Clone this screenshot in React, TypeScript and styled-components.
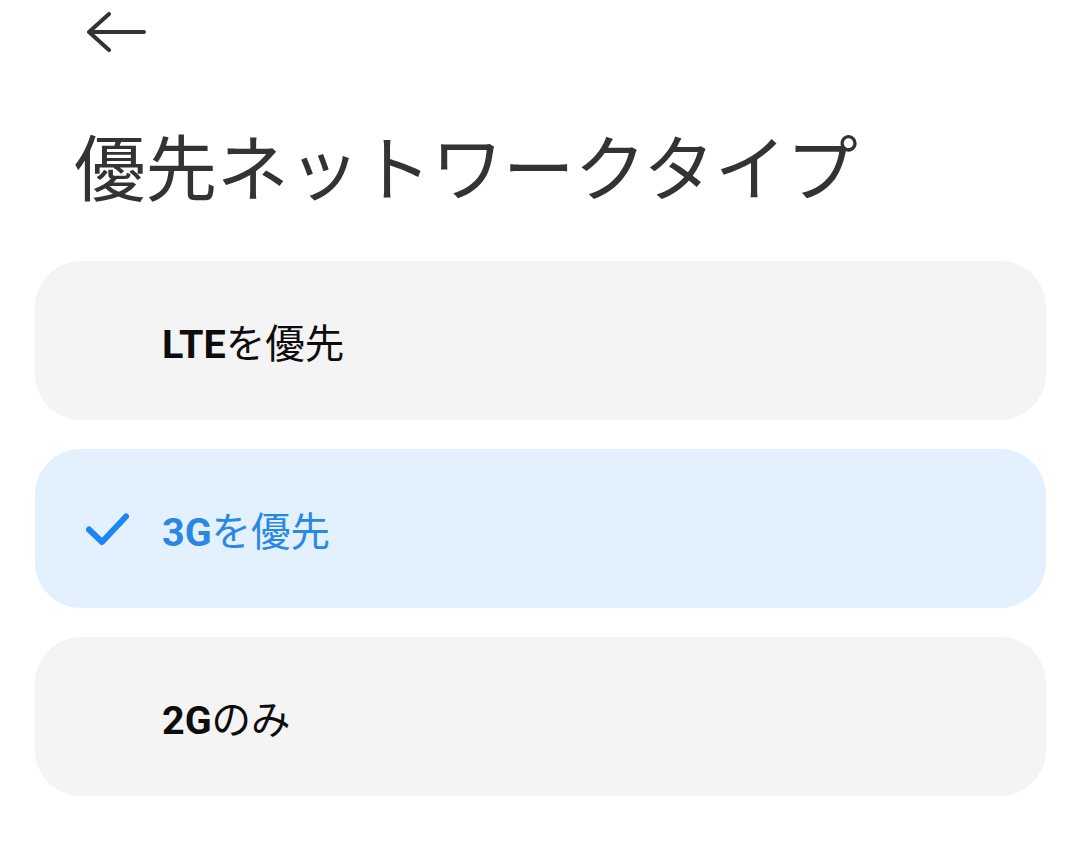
import styled, { createGlobalStyle } from "styled-components";

const GlobalStyle = createGlobalStyle`
  html, body {
    margin: 0;
    padding: 0;
    background: #ffffff;
  }
  body {
    font-family: Roboto, "Noto Sans CJK JP", sans-serif;
  }
`;

const Page = styled.div`
  width: 1080px;
  min-height: 857px;
  background: #ffffff;
  display: flex;
  flex-direction: column;
`;

const TopBar = styled.div`
  display: flex;
  align-items: center;
  height: 64px;
  padding-left: 86px;
`;

const BackButton = styled.button`
  display: flex;
  align-items: center;
  justify-content: center;
  padding: 0;
  border: none;
  background: none;
  cursor: pointer;
  color: #333333;
`;

const Title = styled.h1`
  margin: 57px 0 0 0;
  padding-left: 74px;
  font-family: "Noto Sans CJK JP", sans-serif;
  font-size: 71.5px;
  font-weight: 400;
  line-height: 86px;
  color: #333333;
`;

const OptionList = styled.div`
  display: flex;
  flex-direction: column;
  gap: 29px;
  margin: 54px 34px 0 35px;
`;

const Option = styled.div<{ $selected?: boolean }>`
  display: flex;
  align-items: center;
  gap: 32px;
  height: 159px;
  padding-left: 51px;
  border-radius: 46px;
  background: ${(p) => (p.$selected ? "#e3f0fd" : "#f4f4f4")};
  color: ${(p) => (p.$selected ? "#2a88e4" : "#0d0d0d")};
  cursor: pointer;
`;

const CheckSlot = styled.div`
  width: 44px;
  height: 34px;
  display: flex;
  align-items: center;
  justify-content: center;
`;

const Label = styled.span`
  font-family: "Noto Sans CJK JP", sans-serif;
  font-size: 39.5px;
  font-weight: 400;
  line-height: 1;
  padding-top: 4px;
`;

const Latin = styled.span`
  font-family: Roboto, sans-serif;
  font-weight: 700;
`;

const options = [
  { latin: "LTE", rest: "を優先", selected: false },
  { latin: "3G", rest: "を優先", selected: true },
  { latin: "2G", rest: "のみ", selected: false },
];

export default function App() {
  return (
    <>
      <GlobalStyle />
      <Page>
        <TopBar>
          <BackButton aria-label="戻る">
            <svg width="60" height="40" viewBox="0 0 60 40" fill="none">
              <path
                d="M3 20 H58 M23 2 L3 20 L23 38"
                stroke="currentColor"
                strokeWidth="4"
                strokeLinecap="round"
                strokeLinejoin="round"
              />
            </svg>
          </BackButton>
        </TopBar>

        <Title>優先ネットワークタイプ</Title>

        <OptionList>
          {options.map((o) => (
            <Option key={o.latin} $selected={o.selected}>
              <CheckSlot>
                {o.selected && (
                  <svg width="44" height="34" viewBox="0 0 44 34" fill="none">
                    <path
                      d="M3 17.5 L16 30 L40 4.5"
                      stroke="#1d86f0"
                      strokeWidth="6"
                      strokeLinecap="round"
                      strokeLinejoin="round"
                    />
                  </svg>
                )}
              </CheckSlot>
              <Label>
                <Latin>{o.latin}</Latin>
                {o.rest}
              </Label>
            </Option>
          ))}
        </OptionList>
      </Page>
    </>
  );
}
